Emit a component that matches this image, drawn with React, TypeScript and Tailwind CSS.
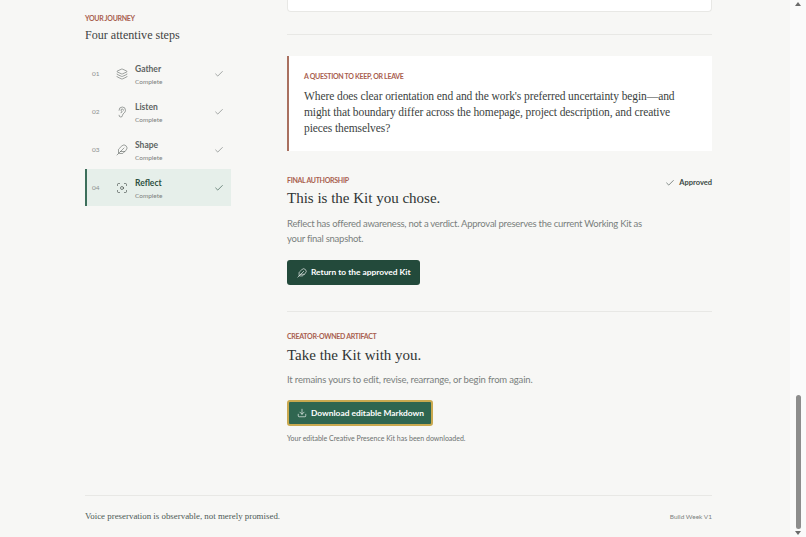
import { Check, Download, Ear, Feather, Focus, Layers } from 'lucide-react'

const serif = "font-['Liberation_Serif',serif]"

const steps = [
  { num: '01', name: 'Gather', Icon: Layers },
  { num: '02', name: 'Listen', Icon: Ear },
  { num: '03', name: 'Shape', Icon: Feather },
  { num: '04', name: 'Reflect', Icon: Focus, active: true },
]

function Sidebar() {
  return (
    <aside className="w-[146px] shrink-0 pt-[13px]">
      <p className="text-[7px] leading-[10px] font-bold uppercase tracking-[-0.3px] text-[#a9604f]">Your journey</p>
      <h2 className={`${serif} mt-[3px] text-[12.1px] leading-[18px] text-[#3f4443]`}>Four attentive steps</h2>
      <ul className="mt-[11px] flex flex-col gap-px">
        {steps.map(({ num, name, Icon, active }) => (
          <li
            key={num}
            className={`flex h-[37px] items-center pr-[7px] ${active ? 'border-l-2 border-[#3d6f5b] bg-[#e6efea] pl-[5px]' : 'pl-[7px]'}`}
          >
            <span className="w-[24px] text-[6.5px] text-[#8b908e]">{num}</span>
            <Icon size={12} strokeWidth={1.25} className={active ? 'text-[#38403d]' : 'text-[#656b69]'} />
            <div className="ml-[7px] flex-1 pt-[3px]">
              <p className={`text-[8.5px] leading-[12px] font-bold ${active ? 'text-[#2c4f41]' : 'text-[#5e6462]'}`}>{name}</p>
              <p className="mt-[2px] text-[6.5px] leading-[10px] tracking-[-0.03px] text-[#7d8280]">Complete</p>
            </div>
            <Check size={10} strokeWidth={1.5} className={active ? 'text-[#2c4f41]' : 'text-[#6f7573]'} />
          </li>
        ))}
      </ul>
    </aside>
  )
}

export default function App() {
  return (
    <div className="flex h-[537px] w-full overflow-hidden bg-[#f7f7f5] font-['Lato',sans-serif]">
      <div className="flex-1 min-w-0 pl-[85px] pr-[78px]">
        <div className="flex gap-[56px]">
          <Sidebar />

          <main className="min-w-0 flex-1">
            <div className="h-[12px] rounded-b-[4px] border-x border-b border-[#e8e8e5] bg-white" />
            <div className="mt-[22px] border-t border-[#e8e8e5]" />

            <section className="mt-[21px] h-[95px] border-l-2 border-[#a9705f] bg-white pl-[15px] pt-[15px]">
              <p className="text-[7px] leading-[10px] font-bold uppercase tracking-[-0.3px] text-[#a9604f]">A question to keep, or leave</p>
              <p className={`${serif} mt-[7px] w-[385px] text-[11.5px] leading-[16px] tracking-[-0.09px] text-[#3b3f3e]`}>
                Where does clear orientation end and the work's preferred uncertainty begin—and might that boundary differ across the homepage, project description, and creative pieces themselves?
              </p>
            </section>

            <section className="mt-[24px] border-b border-[#e8e8e5] pb-[26px]">
              <div className="flex items-start justify-between">
                <p className="text-[7px] leading-[10px] font-bold uppercase tracking-[-0.3px] text-[#a9604f]">Final authorship</p>
                <span className="mt-[2px] flex items-center gap-[4px] text-[7.5px] font-bold leading-[12px] text-[#3b4a45]">
                  <Check size={10} strokeWidth={1.5} />
                  Approved
                </span>
              </div>
              <h3 className={`${serif} text-[15px] leading-[18px] text-[#2f3433]`}>This is the Kit you chose.</h3>
              <p className="mt-[9px] w-[370px] text-[9.5px] leading-[15px] tracking-[-0.25px] text-[#7a7f7d]">
                Reflect has offered awareness, not a verdict. Approval preserves the current Working Kit as your final snapshot.
              </p>
              <button className="mt-[14px] flex h-[25px] w-[133px] items-center gap-[4px] rounded-[3px] bg-[#234a3b] pl-[10px] text-[8.4px] font-bold whitespace-nowrap text-white">
                <Feather size={10} strokeWidth={1.5} />
                Return to the approved Kit
              </button>
            </section>

            <section className="pt-[19px]">
              <p className="text-[7px] leading-[10px] font-bold uppercase tracking-[-0.3px] text-[#a9604f]">Creator-owned artifact</p>
              <h3 className={`${serif} mt-[3px] text-[15px] leading-[22px] text-[#2f3433]`}>Take the Kit with you.</h3>
              <p className="mt-[6px] text-[9.5px] leading-[15px] tracking-[-0.17px] text-[#7a7f7d]">It remains yours to edit, revise, rearrange, or begin from again.</p>
              <button className="mt-[13px] flex h-[26px] w-[146px] items-center gap-[4px] rounded-[3px] border-2 border-[#c9a94f] bg-[#2f6650] pl-[8px] text-[8.4px] font-bold whitespace-nowrap text-white">
                <Download size={10} strokeWidth={1.5} />
                Download editable Markdown
              </button>
              <p className="mt-[7px] text-[7px] leading-[10px] text-[#6c716f]">Your editable Creative Presence Kit has been downloaded.</p>
            </section>
          </main>
        </div>

        <footer className="mt-[52px] flex h-[43px] items-center justify-between border-t border-[#e8e8e5]">
          <p className={`${serif} text-[8.9px] text-[#4d5a55]`}>Voice preservation is observable, not merely promised.</p>
          <p className="text-[6.5px] text-[#7d8280]">Build Week V1</p>
        </footer>
      </div>

      <div className="flex w-[16px] shrink-0 flex-col items-center justify-between bg-[#fafafa] py-[2px]">
        <div className="h-0 w-0 border-x-[3px] border-b-[4px] border-x-transparent border-b-[#6b6b6b]" />
        <div className="mt-[386px] h-[134px] w-[5px] rounded-full bg-[#8d8d8d]" />
        <div className="h-0 w-0 border-x-[3px] border-t-[4px] border-x-transparent border-t-[#6b6b6b]" />
      </div>
    </div>
  )
}
